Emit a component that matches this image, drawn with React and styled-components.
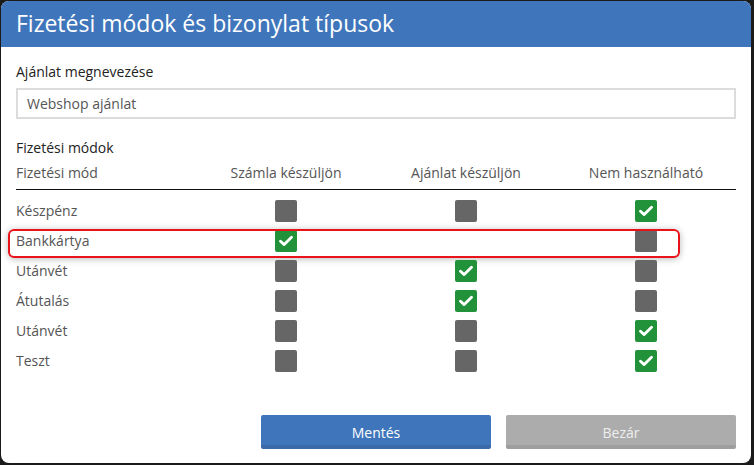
import React from 'react';
import styled, { createGlobalStyle } from 'styled-components';

const Global = createGlobalStyle`
    html, body {
        margin: 0;
        padding: 0;
        background: #1b1b1b;
        font-family: 'Open Sans', 'Noto Sans', sans-serif;
    }
`

const Dialog = styled.div`
    margin: 1px 0 0 1px;
    width: 750px;
    height: 462px;
    background: #fff;
    border-radius: 8px;
    overflow: hidden;
    display: flex;
    flex-direction: column;
`

const Header = styled.div`
    height: 46px;
    background: #3f76bb;
    color: #fff;
    font-size: 23px;
    line-height: 44px;
    padding-left: 15px;
    flex-shrink: 0;
`

const Body = styled.div`
    flex: 1;
    padding: 15px 15px 0 15px;
    display: flex;
    flex-direction: column;
    position: relative;
`

const Label = styled.div`
    font-size: 14px;
    line-height: 20px;
    color: #222;
    margin-bottom: ${p => p.gap ?? 6}px;
`

const Input = styled.input`
    box-sizing: border-box;
    width: 720px;
    height: 31px;
    border: 2px solid #dcdcdc;
    padding: 0 9px;
    font-family: inherit;
    font-size: 14px;
    color: #555;
    outline: none;
    margin-bottom: 19px;
`

const Table = styled.div`
    width: 720px;
`

const HeadRow = styled.div`
    display: grid;
    grid-template-columns: repeat(4, 180px);
    height: 31px;
    border-bottom: 1px solid #111;
    margin-bottom: 6px;
`

const HeadCell = styled.div`
    font-size: 14px;
    line-height: 20px;
    color: #555;
    text-align: ${p => p.left ? 'left' : 'center'};
    padding-top: 5px;
`

const Row = styled.div`
    display: grid;
    grid-template-columns: repeat(4, 180px);
    height: 30px;
    align-items: center;
    position: relative;
`

const RowLabel = styled.div`
    font-size: 14px;
    color: #555;
    line-height: 20px;
`

const Cell = styled.div`
    display: flex;
    justify-content: center;
`

const Box = styled.div`
    width: 22px;
    height: 22px;
    border-radius: 2px;
    background: ${p => p.checked ? '#21913a' : '#666'};
    display: flex;
    align-items: center;
    justify-content: center;
`

const Highlight = styled.div`
    position: absolute;
    left: -8px;
    top: 3px;
    width: 668px;
    height: 25px;
    border: 2px solid #e8141a;
    border-radius: 6px;
    box-shadow: 0 1px 7px rgba(0, 0, 0, 0.28);
    pointer-events: none;
`

const Buttons = styled.div`
    margin-top: auto;
    margin-bottom: 14px;
    display: flex;
    justify-content: flex-end;
    gap: 15px;
    width: 720px;
`

const Button = styled.button`
    width: 230px;
    height: 34px;
    border: none;
    border-radius: 2px;
    border-bottom: 4px solid ${p => p.grey ? '#9e9e9e' : '#3b6aa8'};
    background: ${p => p.grey ? '#acacac' : '#3f76bb'};
    color: ${p => p.grey ? '#eee' : '#fff'};
    font-family: inherit;
    font-size: 14px;
    padding: 4px 0 0 0;
`

const Check = () => (
    <svg width="14" height="12" viewBox="0 0 14 12">
        <path d="M1.5 6.2 L5.2 9.6 L12.5 2.3" fill="none" stroke="#fff" strokeWidth="2.8" strokeLinecap="round" strokeLinejoin="round"/>
    </svg>
)

const rows = [
    { name: 'Készpénz', vals: [false, false, true] },
    { name: 'Bankkártya', vals: [true, null, false], mark: true },
    { name: 'Utánvét', vals: [false, true, false] },
    { name: 'Átutalás', vals: [false, true, false] },
    { name: 'Utánvét', vals: [false, false, true] },
    { name: 'Teszt', vals: [false, false, true] },
]

const App = () => {
    return (
        <>
            <Global />
            <Dialog>
                <Header>Fizetési módok és bizonylat típusok</Header>
                <Body>
                    <Label>Ajánlat megnevezése</Label>
                    <Input defaultValue="Webshop ajánlat" />
                    <Label gap={0}>Fizetési módok</Label>
                    <Table>
                        <HeadRow>
                            <HeadCell left>Fizetési mód</HeadCell>
                            <HeadCell>Számla készüljön</HeadCell>
                            <HeadCell>Ajánlat készüljön</HeadCell>
                            <HeadCell>Nem használható</HeadCell>
                        </HeadRow>
                        {rows.map((r, i) => (
                            <Row key={i}>
                                <RowLabel>{r.name}</RowLabel>
                                {r.vals.map((v, j) => (
                                    <Cell key={j}>
                                        {v !== null && <Box checked={v}>{v && <Check />}</Box>}
                                    </Cell>
                                ))}
                                {r.mark && <Highlight />}
                            </Row>
                        ))}
                    </Table>
                    <Buttons>
                        <Button>Mentés</Button>
                        <Button grey>Bezár</Button>
                    </Buttons>
                </Body>
            </Dialog>
        </>
    )
}

export default App
